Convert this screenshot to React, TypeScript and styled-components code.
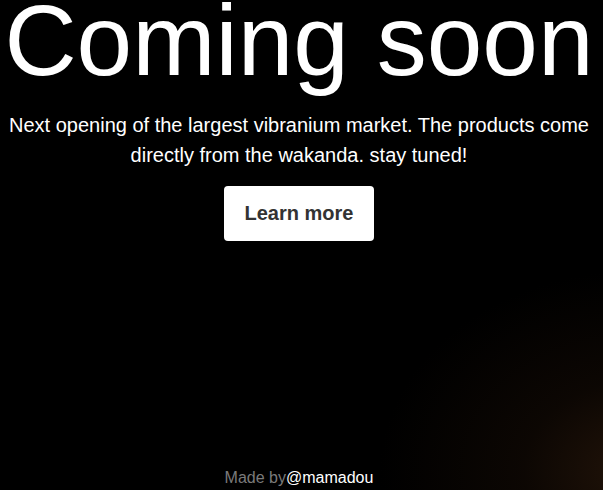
import React from "react";
import styled, { createGlobalStyle } from "styled-components";

const GlobalStyle = createGlobalStyle`
  html, body { margin: 0; padding: 0; background: #000; }
  body { font-family: "Liberation Sans", Arial, sans-serif; }
  * { box-sizing: border-box; }
`;

const Page = styled.div`
  min-height: 100vh;
  height: 490px;
  padding-right: 5px;
  display: flex;
  flex-direction: column;
  align-items: center;
  overflow: hidden;
  background:
    radial-gradient(ellipse 260px 200px at 640px 470px, rgba(38, 22, 10, 0.9) 0%, rgba(20, 11, 5, 0.6) 45%, rgba(0, 0, 0, 0) 100%),
    #000;
  color: #fff;
`;

const Hero = styled.main`
  flex: 1;
  display: flex;
  flex-direction: column;
  align-items: center;
  text-align: center;
`;

const Title = styled.h1`
  margin: 0;
  font-size: 100px;
  font-weight: 400;
  line-height: 0.8;
  height: 80px;
  color: #fff;
  white-space: nowrap;
`;

const Lead = styled.p`
  margin: 30px 0 0;
  font-size: 20px;
  line-height: 30px;
  color: #fff;
  max-width: 590px;
`;

const Button = styled.a`
  margin-top: 16px;
  display: inline-flex;
  align-items: center;
  justify-content: center;
  width: 150px;
  height: 55px;
  background: #fff;
  color: #333;
  border-radius: 4px;
  font-size: 20px;
  font-weight: 700;
  text-decoration: none;
`;

const Footer = styled.footer`
  padding-bottom: 3px;
  font-size: 16px;
  line-height: 18px;
  color: #7a7a7a;
`;

const Handle = styled.span`
  color: #fff;
`;

export default function App() {
  return (
    <>
      <GlobalStyle />
      <Page>
        <Hero>
          <Title>Coming soon</Title>
          <Lead>
            Next opening of the largest vibranium market. The products come directly from the
            wakanda. stay tuned!
          </Lead>
          <Button href="#">Learn more</Button>
        </Hero>
        <Footer>
          Made by<Handle>@mamadou</Handle>
        </Footer>
      </Page>
    </>
  );
}
